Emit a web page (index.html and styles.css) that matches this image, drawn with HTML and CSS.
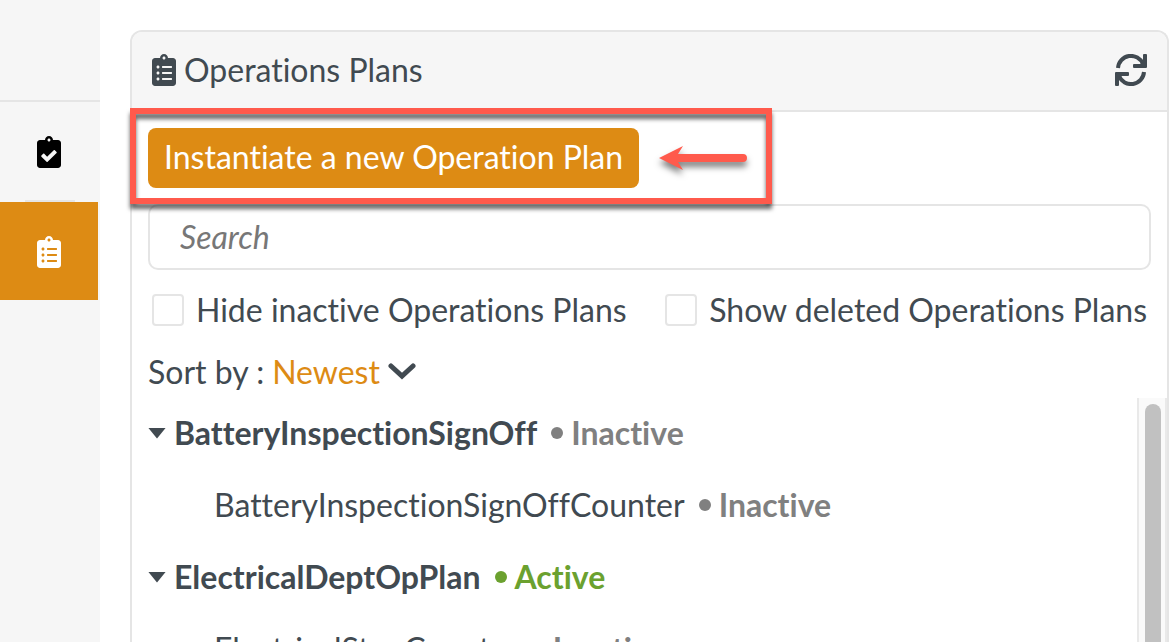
FILE: index.html
```html
<!DOCTYPE html>
<html lang="en">
<head>
    <meta charset="UTF-8">
    <meta name="viewport" content="width=device-width, initial-scale=1.0">
    <title>Operations Plans</title>
    <link rel="stylesheet" href="styles.css">
</head>
<body>
    <nav class="sidebar">
        <div class="sidebar-top"></div>
        <a href="#tasks" class="nav-item" aria-label="Tasks">
            <svg width="24" height="32" viewBox="0 0 384 512"><path fill="currentColor" d="M336 64h-80c0-35.300-28.700-64-64-64s-64 28.700-64 64H48C21.500 64 0 85.500 0 112v352c0 26.500 21.500 48 48 48h288c26.500 0 48-21.500 48-48V112c0-26.500-21.500-48-48-48zM192 40c13.300 0 24 10.700 24 24s-10.700 24-24 24-24-10.700-24-24 10.700-24 24-24zm121.200 231.800l-143 141.800c-4.700 4.700-12.300 4.600-17-.1l-82.600-83.300c-4.700-4.700-4.600-12.300.1-17L99.100 285c4.700-4.700 12.300-4.600 17 .1l46 46.400 106-105.200c4.700-4.700 12.300-4.600 17 .1l28.200 28.400c4.700 4.800 4.600 12.300-.1 17z"/></svg>
        </a>
        <a href="#plans" class="nav-item active" aria-label="Operations Plans">
            <svg width="24" height="32" viewBox="0 0 384 512"><path fill="currentColor" d="M336 64h-80c0-35.300-28.700-64-64-64s-64 28.700-64 64H48C21.500 64 0 85.500 0 112v352c0 26.500 21.500 48 48 48h288c26.500 0 48-21.500 48-48V112c0-26.500-21.500-48-48-48zM96 424c-13.300 0-24-10.700-24-24s10.700-24 24-24 24 10.700 24 24-10.700 24-24 24zm0-96c-13.300 0-24-10.700-24-24s10.700-24 24-24 24 10.700 24 24-10.700 24-24 24zm0-96c-13.300 0-24-10.700-24-24s10.700-24 24-24 24 10.700 24 24-10.700 24-24 24zm96-192c13.300 0 24 10.700 24 24s-10.700 24-24 24-24-10.700-24-24 10.700-24 24-24zm128 368c0 4.400-3.600 8-8 8H168c-4.400 0-8-3.600-8-8v-16c0-4.400 3.600-8 8-8h144c4.400 0 8 3.600 8 8v16zm0-96c0 4.400-3.600 8-8 8H168c-4.400 0-8-3.600-8-8v-16c0-4.400 3.600-8 8-8h144c4.400 0 8 3.600 8 8v16zm0-96c0 4.400-3.600 8-8 8H168c-4.400 0-8-3.600-8-8v-16c0-4.400 3.600-8 8-8h144c4.400 0 8 3.600 8 8v16z"/></svg>
        </a>
    </nav>

    <main class="panel">
        <header class="panel-header">
            <svg width="24" height="32" viewBox="0 0 384 512"><path fill="currentColor" d="M336 64h-80c0-35.300-28.700-64-64-64s-64 28.700-64 64H48C21.500 64 0 85.500 0 112v352c0 26.500 21.500 48 48 48h288c26.500 0 48-21.500 48-48V112c0-26.500-21.500-48-48-48zM96 424c-13.300 0-24-10.700-24-24s10.700-24 24-24 24 10.700 24 24-10.700 24-24 24zm0-96c-13.300 0-24-10.700-24-24s10.700-24 24-24 24 10.700 24 24-10.700 24-24 24zm0-96c-13.300 0-24-10.700-24-24s10.700-24 24-24 24 10.700 24 24-10.700 24-24 24zm96-192c13.300 0 24 10.700 24 24s-10.700 24-24 24-24-10.700-24-24 10.700-24 24-24zm128 368c0 4.400-3.600 8-8 8H168c-4.400 0-8-3.600-8-8v-16c0-4.400 3.600-8 8-8h144c4.400 0 8 3.600 8 8v16zm0-96c0 4.400-3.600 8-8 8H168c-4.400 0-8-3.600-8-8v-16c0-4.400 3.600-8 8-8h144c4.400 0 8 3.600 8 8v16zm0-96c0 4.400-3.600 8-8 8H168c-4.400 0-8-3.600-8-8v-16c0-4.400 3.600-8 8-8h144c4.400 0 8 3.600 8 8v16z"/></svg>
            <h1>Operations Plans</h1>
            <button type="button" class="refresh" aria-label="Refresh">
                <svg width="32" height="32" viewBox="0 0 32 32">
                    <path fill="none" stroke="currentColor" stroke-width="4" d="M3 14A13 13 0 0 1 28 10M29 18A13 13 0 0 1 4 22"/>
                    <path fill="currentColor" d="M28 1q0-1 1-1h2q1 0 1 1v12q0 1-1 1H19q-1 0-1-1v-2q0-1 1-1h6l3-2zM4 31q0 1-1 1H1q-1 0-1-1V19q0-1 1-1h12q1 0 1 1v2q0 1-1 1H7l-3 2z"/>
                </svg>
            </button>
        </header>

        <div class="controls">
            <div class="callout">
                <button type="button" class="create">Instantiate a new Operation Plan</button>
                <svg class="arrow" width="88" height="24" viewBox="0 0 88 24"><path fill="#ff5a4c" d="M0 12L24 0l-5 8h65a4 4 0 0 1 0 8H19l5 8z"/></svg>
            </div>

            <input type="text" class="search" placeholder="Search" aria-label="Search">

            <div class="filters">
                <label><input type="checkbox">Hide inactive Operations Plans</label>
                <label><input type="checkbox">Show deleted Operations Plans</label>
            </div>

            <div class="sort">
                <label for="sort-by">Sort by :</label>
                <select id="sort-by">
                    <option>Newest</option>
                </select>
                <svg width="28" height="18" viewBox="0 0 28 18"><path fill="none" stroke="currentColor" stroke-width="5" stroke-linecap="round" stroke-linejoin="miter" d="M3 3l11 10L25 3"/></svg>
            </div>
        </div>

        <div class="scroll-area">
            <ul class="plans">
                <li class="plan"><span class="caret"></span><span class="name">BatteryInspectionSignOff</span><span class="status">Inactive</span></li>
                <li class="plan child"><span class="name">BatteryInspectionSignOffCounter</span><span class="status">Inactive</span></li>
                <li class="plan"><span class="caret"></span><span class="name">ElectricalDeptOpPlan</span><span class="status on">Active</span></li>
                <li class="plan child"><span class="name">ElectricalStepCounter</span><span class="status">Inactive</span></li>
            </ul>
            <div class="track"><div class="thumb"></div></div>
        </div>
    </main>
</body>
</html>
```

FILE: styles.css
```css
* {
    box-sizing: border-box;
}
body {
    display: flex;
    height: 100vh;
    margin: 0;
    overflow: hidden;
    background: #fff;
    color: #414a51;
    font-family: Lato, sans-serif;
    font-size: 32px;
    font-variant-ligatures: none;
    line-height: 40px;
}
button, input, select {
    font: inherit;
    font-variant-ligatures: none;
    color: inherit;
}
svg {
    display: block;
    flex: none;
}

/* left navigation */
.sidebar {
    flex: none;
    width: 100px;
    background: #f6f6f6;
}
.sidebar-top {
    height: 102px;
    border-bottom: 2px solid #e5e5e5;
}
.nav-item {
    position: relative;
    display: flex;
    align-items: center;
    justify-content: center;
    width: 98px;
    height: 98px;
    padding-top: 2px;
    color: #000;
}
.nav-item + .nav-item {
    margin-top: 2px;
}
.nav-item.active {
    color: #fff;
    background: #dd8b14;
}
.nav-item.active::before {
    content: "";
    position: absolute;
    top: -2px;
    left: 25px;
    width: 50px;
    height: 2px;
    background: #e5e5e5;
}

/* main panel */
.panel {
    display: flex;
    flex-direction: column;
    flex: 1;
    min-width: 0;
    margin: 30px 5px 0 30px;
    border: 2px solid #e5e5e5;
    border-bottom: 0;
    border-radius: 12px 12px 0 0;
}
.panel-header {
    display: flex;
    align-items: center;
    gap: 8px;
    height: 80px;
    padding: 0 20px 2px;
    border-bottom: 2px solid #e5e5e5;
    border-radius: 10px 10px 0 0;
    background: #f6f6f6;
}
.panel-header h1 {
    margin: 0;
    font-size: 32px;
    font-weight: 400;
}
.refresh {
    margin-left: auto;
    padding: 0;
    border: 0;
    background: none;
    cursor: pointer;
}
.controls {
    padding: 16px 16px 0;
}
.callout {
    position: relative;
    display: flex;
    align-items: center;
    gap: 20px;
    width: fit-content;
}
.callout::after {
    content: "";
    position: absolute;
    inset: -20px -25px -16px -18px;
    border: 6px solid #ff5a4c;
    filter: drop-shadow(0 5px 2px rgba(0, 0, 0, 0.6));
    pointer-events: none;
}
.create {
    height: 60px;
    padding: 0 16px 2px;
    border: 0;
    border-radius: 8px;
    background: #dd8b14;
    color: #fff;
    cursor: pointer;
}
.arrow {
    overflow: visible;
    filter: drop-shadow(0 5px 3px rgba(0, 0, 0, 0.5));
}
.search {
    display: block;
    width: 100%;
    height: 66px;
    margin-top: 16px;
    padding: 0 30px 2px;
    border: 2px solid #e5e5e5;
    border-radius: 10px;
}
.search::placeholder {
    color: #777;
    font-style: italic;
}
.filters {
    display: flex;
    justify-content: space-between;
    margin-top: 20px;
    padding: 0 4px;
    white-space: nowrap;
}
.filters label {
    display: flex;
    align-items: center;
    gap: 12px;
}
.filters input {
    appearance: none;
    width: 32px;
    height: 32px;
    margin: 0;
    border: 2px solid #e5e5e5;
    border-radius: 4px;
}
.sort {
    display: flex;
    align-items: center;
    gap: 8px;
    margin-top: 22px;
}
.sort select {
    appearance: none;
    field-sizing: content;
    padding: 0;
    border: 0;
    background: none;
    color: #dd8b14;
}

/* plan list */
.scroll-area {
    display: flex;
    flex: 1;
    min-height: 0;
    margin-top: 6px;
    overflow: hidden;
}
.plans {
    flex: 1;
    margin: 0;
    padding: 0 16px;
    list-style: none;
}
.plan {
    display: flex;
    align-items: center;
    height: 72px;
    padding-bottom: 2px;
}
.plan .name {
    font-weight: 700;
}
.plan.child {
    padding-left: 66px;
}
.plan.child .name {
    font-weight: 400;
}
.caret {
    width: 18px;
    height: 11px;
    margin-right: 8px;
    background: #414a51;
    clip-path: polygon(0 0, 100% 0, 50% 100%);
}
.status {
    display: flex;
    align-items: center;
    gap: 8px;
    margin-left: 14px;
    color: #808080;
    font-weight: 700;
}
.status::before {
    content: "";
    width: 12px;
    height: 12px;
    border-radius: 50%;
    background: currentColor;
}
.status.on {
    color: #6ba12f;
}
.track {
    width: 30px;
    padding: 6px 4px 0 6px;
    border: 2px solid #e9e9e9;
    border-width: 0 2px;
    background: #fafafa;
}
.thumb {
    width: 16px;
    height: 100%;
    border-radius: 8px 8px 0 0;
    background: #c1c1c1;
}
```
